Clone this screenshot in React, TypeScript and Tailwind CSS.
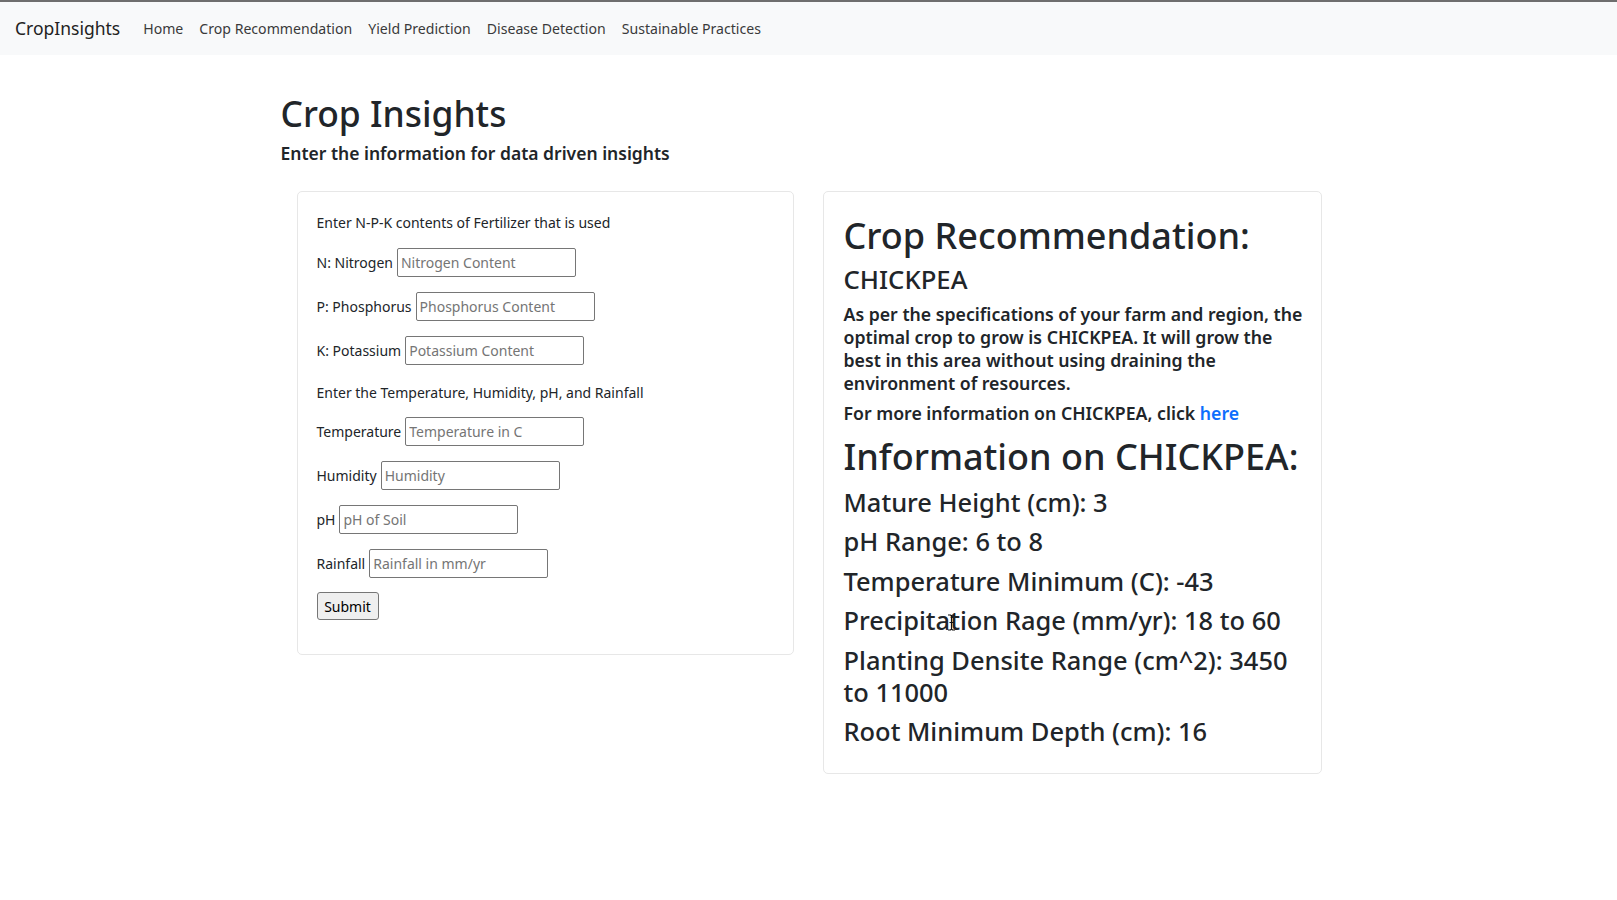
import React from "react";

function Row({ label, ph, cls }: { label: string; ph: string; cls: string }) {
  return (
    <div className={`flex items-center h-[29px] ${cls}`}>
      <label className="whitespace-nowrap">{label}</label>
      <input
        placeholder={ph}
        className="ml-[4px] w-[179px] h-[29px] border border-[#767676] rounded-[2px] px-[3px] text-[14px] text-[#212529] placeholder:text-[#757575] outline-none bg-white"
      />
    </div>
  );
}

function IBeam() {
  return (
    <svg className="absolute left-[947px] top-[614px]" width="9" height="17" viewBox="0 0 9 17">
      <path d="M1 1h2.5l1 1 1-1H8M4.5 2v13M1 16h2.5l1-1 1 1H8M2.5 8.5h4" fill="none" stroke="#111" strokeWidth="1.2" />
    </svg>
  );
}

export default function App() {
  return (
    <div className="relative min-h-[900px] bg-white text-[#212529] font-['Noto_Sans','Open_Sans',sans-serif]">
      <nav className="h-[55px] border-t-2 border-[#6e6e6e] bg-[#f8f9fa] flex items-center pl-[15px]">
        <span className="text-[17.5px] text-[#222] mr-[15px]">CropInsights</span>
        <div className="flex text-[14.1px] text-[#3a3a3a]">
          <a className="px-[8px]">Home</a>
          <a className="px-[8px]">Crop Recommendation</a>
          <a className="px-[8px]">Yield Prediction</a>
          <a className="px-[8px]">Disease Detection</a>
          <a className="px-[8px]">Sustainable Practices</a>
        </div>
      </nav>

      <main className="w-[1056px] mx-auto">
        <h1 className="mt-[36px] text-[35.4px] leading-[45px] font-medium">Crop Insights</h1>
        <h5 className="mt-[4.5px] text-[17.5px] leading-[24px] font-semibold">
          Enter the information for data driven insights
        </h5>

        <div className="mt-[26.5px] ml-[16px] flex items-start">
          <div className="w-[497px] border border-[#e7e7e7] rounded-[5px] pt-[19px] pb-[34px] pl-[19px] text-[14px]">
            <p className="leading-[24px] h-[24px]">Enter N-P-K contents of Fertilizer that is used</p>
            <Row label="N: Nitrogen" ph="Nitrogen Content" cls="mt-[13px]" />
            <Row label="P: Phosphorus" ph="Phosphorus Content" cls="mt-[15px]" />
            <Row label="K: Potassium" ph="Potassium Content" cls="mt-[15px]" />
            <p className="mt-[16px] leading-[24px] h-[24px]">Enter the Temperature, Humidity, pH, and Rainfall</p>
            <Row label="Temperature" ph="Temperature in C" cls="mt-[12px]" />
            <Row label="Humidity" ph="Humidity" cls="mt-[15px]" />
            <Row label="pH" ph="pH of Soil" cls="mt-[15px]" />
            <Row label="Rainfall" ph="Rainfall in mm/yr" cls="mt-[15px]" />
            <button className="mt-[14px] w-[62px] h-[28px] bg-[#efefef] border border-[#767676] rounded-[3px] text-[14px] text-black">
              Submit
            </button>
          </div>

          <div className="w-[499px] ml-[29px] border border-[#e7e7e7] rounded-[5px] pl-[20px] pt-[25px] pb-[26px]">
            <h2 className="text-[36px] leading-[38px] font-medium whitespace-nowrap">Crop Recommendation:</h2>
            <h4 className="mt-[10px] text-[25.7px] leading-[30px] font-medium">CHICKPEA</h4>
            <p className="mt-[8px] text-[17.7px] leading-[23px] font-semibold whitespace-nowrap">
              As per the specifications of your farm and region, the
              <br />
              optimal crop to grow is CHICKPEA. It will grow the
              <br />
              best in this area without using draining the
              <br />
              environment of resources.
            </p>
            <p className="mt-[7px] text-[17.7px] leading-[23px] font-semibold whitespace-nowrap">
              For more information on CHICKPEA, click <a className="text-[#0d6efd]">here</a>
            </p>
            <h1 className="mt-[9px] text-[36px] leading-[46px] font-medium whitespace-nowrap">Information on CHICKPEA:</h1>
            <div className="mt-[5.5px] flex flex-col gap-[7.5px] text-[25.45px] leading-[32px] font-medium whitespace-nowrap">
              <h3>Mature Height (cm): 3</h3>
              <h3>pH Range: 6 to 8</h3>
              <h3>Temperature Minimum (C): -43</h3>
              <h3>Precipitation Rage (mm/yr): 18 to 60</h3>
              <h3>
                Planting Densite Range (cm^2): 3450
                <br />
                to 11000
              </h3>
              <h3>Root Minimum Depth (cm): 16</h3>
            </div>
          </div>
        </div>
      </main>
      <IBeam />
    </div>
  );
}
